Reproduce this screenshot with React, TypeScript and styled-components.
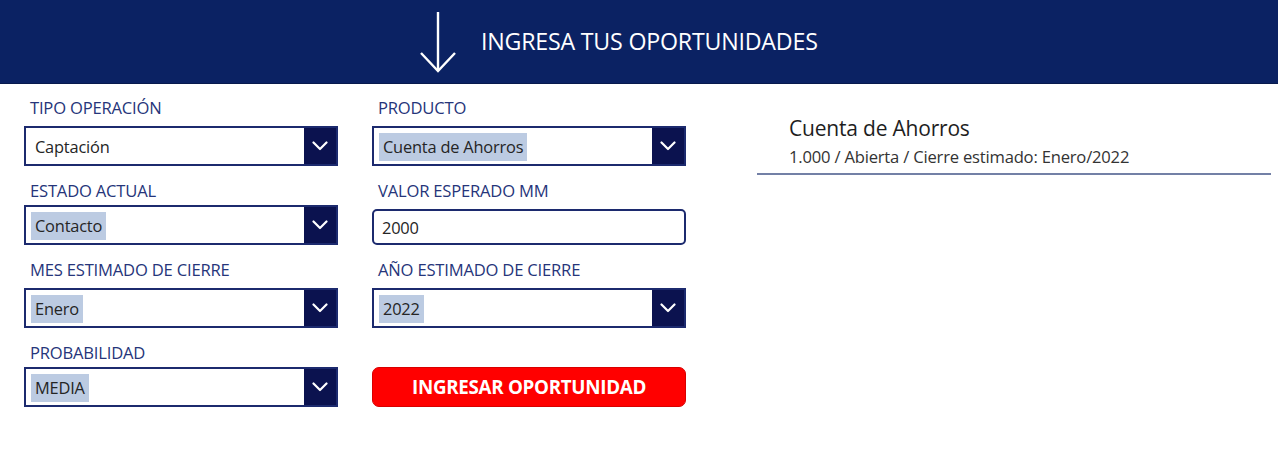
import React from "react";
import styled, { createGlobalStyle } from "styled-components";

const GlobalStyle = createGlobalStyle`
  html, body {
    margin: 0;
    padding: 0;
    background: #ffffff;
    font-family: "Open Sans", "Noto Sans", "Liberation Sans", sans-serif;
  }
  * { box-sizing: border-box; }
`;

const Page = styled.div`
  width: 1280px;
  height: 468px;
  background: #ffffff;
  overflow: hidden;
`;

const Header = styled.header`
  height: 84px;
  background: #0b2263;
  border-bottom: 1px solid #081a4d;
  display: flex;
  align-items: center;
  gap: 23px;
  padding-left: 418px;
  margin-right: 2px;
`;

const HeaderTitle = styled.h1`
  margin: 0;
  color: #ffffff;
  font-size: 23.2px;
  font-weight: 400;
  letter-spacing: -0.2px;
  padding-bottom: 1px;
`;

const Body = styled.div`
  display: flex;
  align-items: flex-start;
  padding: 14px 0 0 24px;
  gap: 71px;
`;

const Form = styled.div`
  display: grid;
  grid-template-columns: 314px 314px;
  column-gap: 34px;
  row-gap: 15px;
`;

const Field = styled.div<{ $end?: boolean }>`
  display: flex;
  flex-direction: column;
  align-self: ${(p) => (p.$end ? "end" : "start")};
`;

const Label = styled.label<{ $gap: number }>`
  display: block;
  margin: 0 0 ${(p) => p.$gap}px 6px;
  line-height: 20px;
  height: 20px;
  font-size: 16.6px;
  color: #26357a;
  letter-spacing: -0.2px;
  white-space: nowrap;
`;

const Select = styled.div`
  height: 40px;
  border: 2px solid #1c2a6e;
  display: flex;
  align-items: stretch;
  background: #ffffff;
`;

const SelectValue = styled.div`
  flex: 1;
  display: flex;
  align-items: center;
  padding: 2px 0 0 5px;
`;

const ValueText = styled.span<{ $hl?: boolean }>`
  font-size: 16.4px;
  color: #252525;
  line-height: 28px;
  padding: 0 4px;
  background: ${(p) => (p.$hl ? "#bccbe2" : "transparent")};
  letter-spacing: -0.2px;
`;

const ChevronBox = styled.div`
  width: 32px;
  background: #0b124f;
  display: flex;
  align-items: center;
  justify-content: center;
`;

const TextInput = styled.div`
  height: 36px;
  margin-top: 4px;
  border: 2px solid #1c2a6e;
  border-radius: 5px;
  display: flex;
  align-items: center;
  padding: 1px 0 0 8px;
  font-size: 16.4px;
  color: #252525;
  letter-spacing: -0.2px;
`;

const Button = styled.button`
  height: 40px;
  width: 100%;
  border: 1px solid #d80000;
  border-radius: 7px;
  background: #ff0000;
  color: #ffffff;
  font-family: "Open Sans", "Noto Sans", "Liberation Sans", sans-serif;
  font-weight: 700;
  font-size: 18.8px;
  letter-spacing: -0.3px;
  cursor: pointer;
`;

const Panel = styled.section`
  width: 514px;
  margin-top: 16px;
  border-bottom: 2px solid #7380a6;
  padding: 0 0 4px 32px;
`;

const PanelTitle = styled.div`
  font-size: 21px;
  line-height: 28px;
  color: #1e1e1e;
  letter-spacing: -0.2px;
`;

const PanelSub = styled.div`
  font-size: 16.6px;
  line-height: 24px;
  color: #333333;
  margin-top: 3px;
  letter-spacing: -0.2px;
`;

const Chevron = () => (
  <svg width="16" height="10" viewBox="0 0 16 10" aria-hidden="true">
    <path d="M1.5 1.5 L8 8 L14.5 1.5" fill="none" stroke="#ffffff" strokeWidth="2.2" strokeLinecap="round" strokeLinejoin="round" />
  </svg>
);

const DownArrow = () => (
  <svg width="40" height="64" viewBox="0 0 40 64" aria-hidden="true">
    <path d="M20 2 L20 61" stroke="#ffffff" strokeWidth="2.4" fill="none" />
    <path d="M3 43 L20 61 L37 43" stroke="#ffffff" strokeWidth="2.4" fill="none" strokeLinejoin="miter" />
  </svg>
);

type DropProps = { label: string; value: string; hl?: boolean; gap: number };

const Dropdown = ({ label, value, hl, gap }: DropProps) => (
  <Field>
    <Label $gap={gap}>{label}</Label>
    <Select>
      <SelectValue>
        <ValueText $hl={hl}>{value}</ValueText>
      </SelectValue>
      <ChevronBox>
        <Chevron />
      </ChevronBox>
    </Select>
  </Field>
);

export default function App() {
  return (
    <Page>
      <GlobalStyle />
      <Header>
        <DownArrow />
        <HeaderTitle>INGRESA TUS OPORTUNIDADES</HeaderTitle>
      </Header>
      <Body>
        <Form>
          <Dropdown label="TIPO OPERACIÓN" value="Captación" gap={8} />
          <Dropdown label="PRODUCTO" value="Cuenta de Ahorros" hl gap={8} />
          <Dropdown label="ESTADO ACTUAL" value="Contacto" hl gap={4} />
          <Field>
            <Label $gap={4}>VALOR ESPERADO MM</Label>
            <TextInput>2000</TextInput>
          </Field>
          <Dropdown label="MES ESTIMADO DE CIERRE" value="Enero" hl gap={8} />
          <Dropdown label="AÑO ESTIMADO DE CIERRE" value="2022" hl gap={8} />
          <Dropdown label="PROBABILIDAD" value="MEDIA" hl gap={4} />
          <Field $end>
            <Button>INGRESAR OPORTUNIDAD</Button>
          </Field>
        </Form>
        <Panel>
          <PanelTitle>Cuenta de Ahorros</PanelTitle>
          <PanelSub>1.000 / Abierta / Cierre estimado: Enero/2022</PanelSub>
        </Panel>
      </Body>
    </Page>
  );
}
